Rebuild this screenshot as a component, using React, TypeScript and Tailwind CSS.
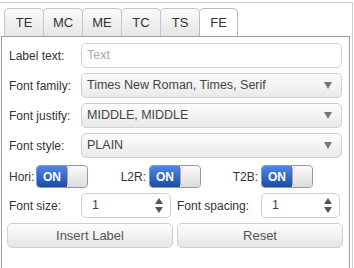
import React from 'react';

const tabs = ['TE', 'MC', 'ME', 'TC', 'TS', 'FE'];

const Label: React.FC<{ text: string; className?: string }> = ({ text, className }) => (
    <span className={`text-[12px] text-[#333] whitespace-nowrap ${className ?? ''}`}>{text}</span>
);

const SelectBox: React.FC<{ value: string }> = ({ value }) => (
    <div className="flex items-center justify-between w-[261px] h-[25px] rounded-[5px] border border-[#cfcfcf] bg-gradient-to-b from-[#fdfdfd] to-[#e9e9e9] pl-[5px] pr-[9px]">
        <span className="text-[12.5px] text-[#444]">{value}</span>
        <svg width="8" height="7" viewBox="0 0 8 7">
            <polygon points="0,0 8,0 4,7" fill="#777" />
        </svg>
    </div>
);

const Toggle: React.FC = () => (
    <div className="flex w-[52px] h-[23px] rounded-[4px] border border-[#8a9bb5] overflow-hidden">
        <div className="flex items-center justify-center w-[30px] bg-gradient-to-b from-[#4f86e6] to-[#1c4ca8] text-white text-[12px] font-bold">
            ON
        </div>
        <div className="flex-1 rounded-[4px] border-l border-[#aaa] bg-gradient-to-b from-[#fafafa] to-[#dcdcdc]" />
    </div>
);

const Spinner: React.FC<{ width: string }> = ({ width }) => (
    <div className={`flex items-center justify-between h-[25px] rounded-[5px] border border-[#cfcfcf] bg-white pl-[10px] pr-[7px] ${width}`}>
        <span className="text-[12.5px] text-[#444]">1</span>
        <svg width="8" height="15" viewBox="0 0 8 15">
            <polygon points="4,0 8,6 0,6" fill="#555" />
            <polygon points="0,9 8,9 4,15" fill="#555" />
        </svg>
    </div>
);

const App: React.FC = () => {
    return (
        <div className="w-[354px] h-[268px] bg-white font-['Liberation_Sans',Arial,sans-serif] pt-[2px]">
            <div className="w-[353px] h-[266px] border-t border-r border-[#cdcdcd]">
                {/* tabs */}
                <div className="flex pl-[4px] pt-[5px]">
                    {tabs.map((t) =>
                        t === 'FE' ? (
                            <div
                                key={t}
                                className="relative z-10 flex items-center justify-center w-[39px] h-[28px] -mb-px rounded-t-[5px] border border-b-0 border-[#bcbcbc] bg-white text-[13px] text-[#333]"
                            >
                                {t}
                            </div>
                        ) : (
                            <div
                                key={t}
                                className="flex items-center justify-center w-[40px] h-[28px] rounded-t-[5px] border border-b-0 border-[#c6c6c6] bg-gradient-to-b from-[#fafafa] to-[#e6e6e6] text-[13px] text-[#333] -mr-px"
                            >
                                {t}
                            </div>
                        )
                    )}
                </div>

                {/* panel */}
                <div className="ml-[1px] w-[349px] h-[232px] border border-b-0 border-[#9e9e9e] px-[6px] pt-[6px]">
                    <div className="flex flex-col gap-[5px]">
                        <div className="flex items-center">
                            <Label text="Label text:" className="w-[73px] pl-[1px]" />
                            <div className="flex items-center w-[261px] h-[25px] rounded-[5px] border border-[#d3d3d3] bg-white pl-[5px]">
                                <span className="text-[12.5px] text-[#aaa]">Text</span>
                            </div>
                        </div>
                        <div className="flex items-center">
                            <Label text="Font family:" className="w-[73px] pl-[1px]" />
                            <SelectBox value="Times New Roman, Times, Serif" />
                        </div>
                        <div className="flex items-center">
                            <Label text="Font justify:" className="w-[73px] pl-[1px]" />
                            <SelectBox value="MIDDLE, MIDDLE" />
                        </div>
                        <div className="flex items-center">
                            <Label text="Font style:" className="w-[73px] pl-[1px]" />
                            <SelectBox value="PLAIN" />
                        </div>

                        {/* toggles */}
                        <div className="flex items-center mt-[2px]">
                            <Label text="Hori:" className="w-[28px] pl-[1px]" />
                            <Toggle />
                            <Label text="L2R:" className="w-[61px] text-right pr-[3px]" />
                            <Toggle />
                            <Label text="T2B:" className="w-[60px] text-right pr-[3px]" />
                            <Toggle />
                        </div>

                        {/* spinners */}
                        <div className="flex items-center">
                            <Label text="Font size:" className="w-[73px] pl-[1px]" />
                            <Spinner width="w-[90px]" />
                            <Label text="Font spacing:" className="w-[90px] pl-[6px]" />
                            <Spinner width="w-[79px]" />
                        </div>

                        {/* buttons */}
                        <div className="flex gap-[4px] -ml-px">
                            <button className="w-[166px] h-[25px] rounded-[5px] border border-[#cfcfcf] bg-gradient-to-b from-[#fdfdfd] to-[#e6e6e6] text-[13px] text-[#555]">
                                Insert Label
                            </button>
                            <button className="w-[166px] h-[25px] rounded-[5px] border border-[#cfcfcf] bg-gradient-to-b from-[#fdfdfd] to-[#e6e6e6] text-[13px] text-[#555]">
                                Reset
                            </button>
                        </div>
                    </div>
                </div>
            </div>
        </div>
    );
};

export default App;
